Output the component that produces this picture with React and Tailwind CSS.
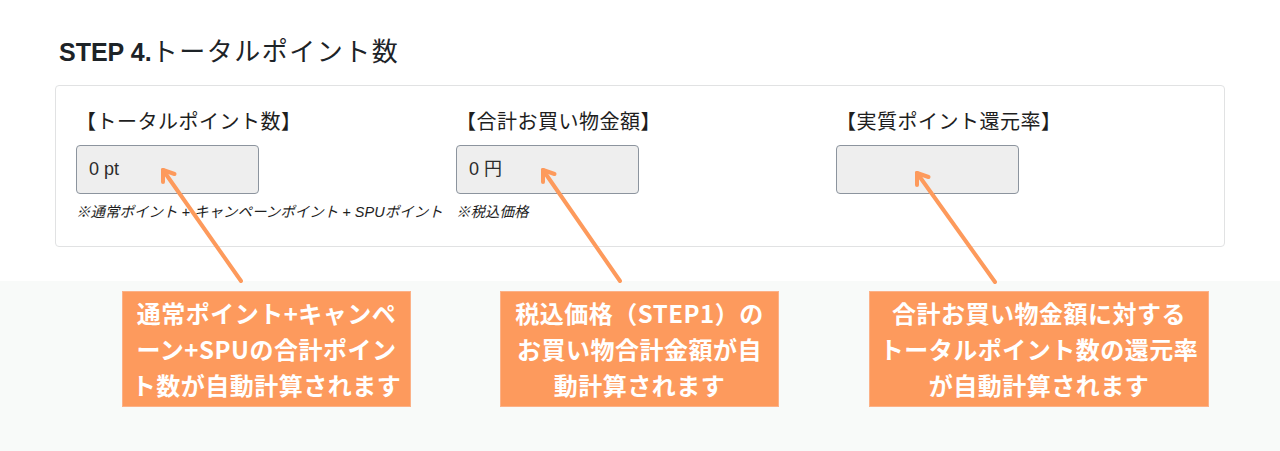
import React from 'react';

const sans = { fontFamily: '"Liberation Sans", "Noto Sans CJK JP", sans-serif' };

const fields = [
    { label: '【トータルポイント数】', value: '0 pt', note: '※通常ポイント + キャンペーンポイント + SPUポイント' },
    { label: '【合計お買い物金額】', value: '0 円', note: '※税込価格' },
    { label: '【実質ポイント還元率】', value: '', note: '' },
];

const callouts = [
    { w: 'w-[289px]', lines: ['通常ポイント+キャンペ', 'ーン+SPUの合計ポイン', 'ト数が自動計算されます'] },
    { w: 'w-[279px]', lines: ['税込価格（STEP1）の', 'お買い物合計金額が自', '動計算されます'] },
    { w: 'w-[340px] ml-px', lines: ['合計お買い物金額に対する', 'トータルポイント数の還元率', 'が自動計算されます'] },
];

// arrow tips, tails sit on top of the callouts
const arrows = [
    { tx: 163, ty: 170, sx: 241, sy: 281 },
    { tx: 543, ty: 170, sx: 620, sy: 281 },
    { tx: 917, ty: 173, sx: 995, sy: 282 },
];

export default function App() {
    return (
        <div className="relative w-[1280px] h-[451px] bg-white overflow-hidden" style={sans}>
            {/* Step panel */}
            <div className="h-[281px] pl-[55px] pt-[34px]">
                <h2 className="pl-[4px] text-[25px] leading-[36px] text-[#1d2327]">
                    <span className="font-bold">STEP 4.</span>
                    <span className="text-[26px] tracking-[1.5px]">トータルポイント数</span>
                </h2>

                <div className="mt-[15px] w-[1170px] h-[162px] border border-[#e1e2e3] rounded-[4px] pt-[24px] pl-[20px]">
                    <div className="grid grid-cols-[380px_380px_1fr]">
                        {fields.map((f) => (
                            <div key={f.label} className="flex flex-col">
                                <div className="text-[20px] leading-[24px] tracking-[0.5px] text-[#1e1e1e]">{f.label}</div>
                                <div className="mt-[11px] w-[183px] h-[49px] bg-[#eeeeee] border border-[#8c949e] rounded-[4px] flex items-center pl-[12px] text-[18px] text-[#2b2b2b]">
                                    {f.value}
                                </div>
                                <div className="mt-[8px] h-[20px] text-[14.5px] leading-[20px] italic text-[#1e1e1e] whitespace-nowrap">
                                    {f.note}
                                </div>
                            </div>
                        ))}
                    </div>
                </div>
            </div>

            {/* Callouts */}
            <div className="h-[170px] bg-[#f8faf9] pt-[10px] pl-[122px] flex gap-[89px]">
                {callouts.map((c, i) => (
                    <div
                        key={i}
                        className={`${c.w} h-[116px] bg-[#fd9a5d] border border-[#fcb187] flex flex-col items-center justify-center text-white font-bold text-[24px] leading-[36px] tracking-[0.5px] whitespace-nowrap`}
                        style={{ fontFamily: '"Noto Sans CJK JP", sans-serif' }}
                    >
                        {c.lines.map((l) => (
                            <span key={l}>{l}</span>
                        ))}
                    </div>
                ))}
            </div>

            {/* Annotation arrows */}
            <svg className="absolute inset-0 pointer-events-none" width="1280" height="451" viewBox="0 0 1280 451">
                {arrows.map((a, i) => (
                    <g key={i} stroke="#fd9a5c" strokeWidth="4" strokeLinecap="round" strokeLinejoin="round" fill="none">
                        <line x1={a.sx} y1={a.sy} x2={a.tx} y2={a.ty} />
                        <polyline points={`${a.tx + 11.5},${a.ty + 4} ${a.tx},${a.ty} ${a.tx},${a.ty + 12}`} />
                    </g>
                ))}
            </svg>
        </div>
    );
}
